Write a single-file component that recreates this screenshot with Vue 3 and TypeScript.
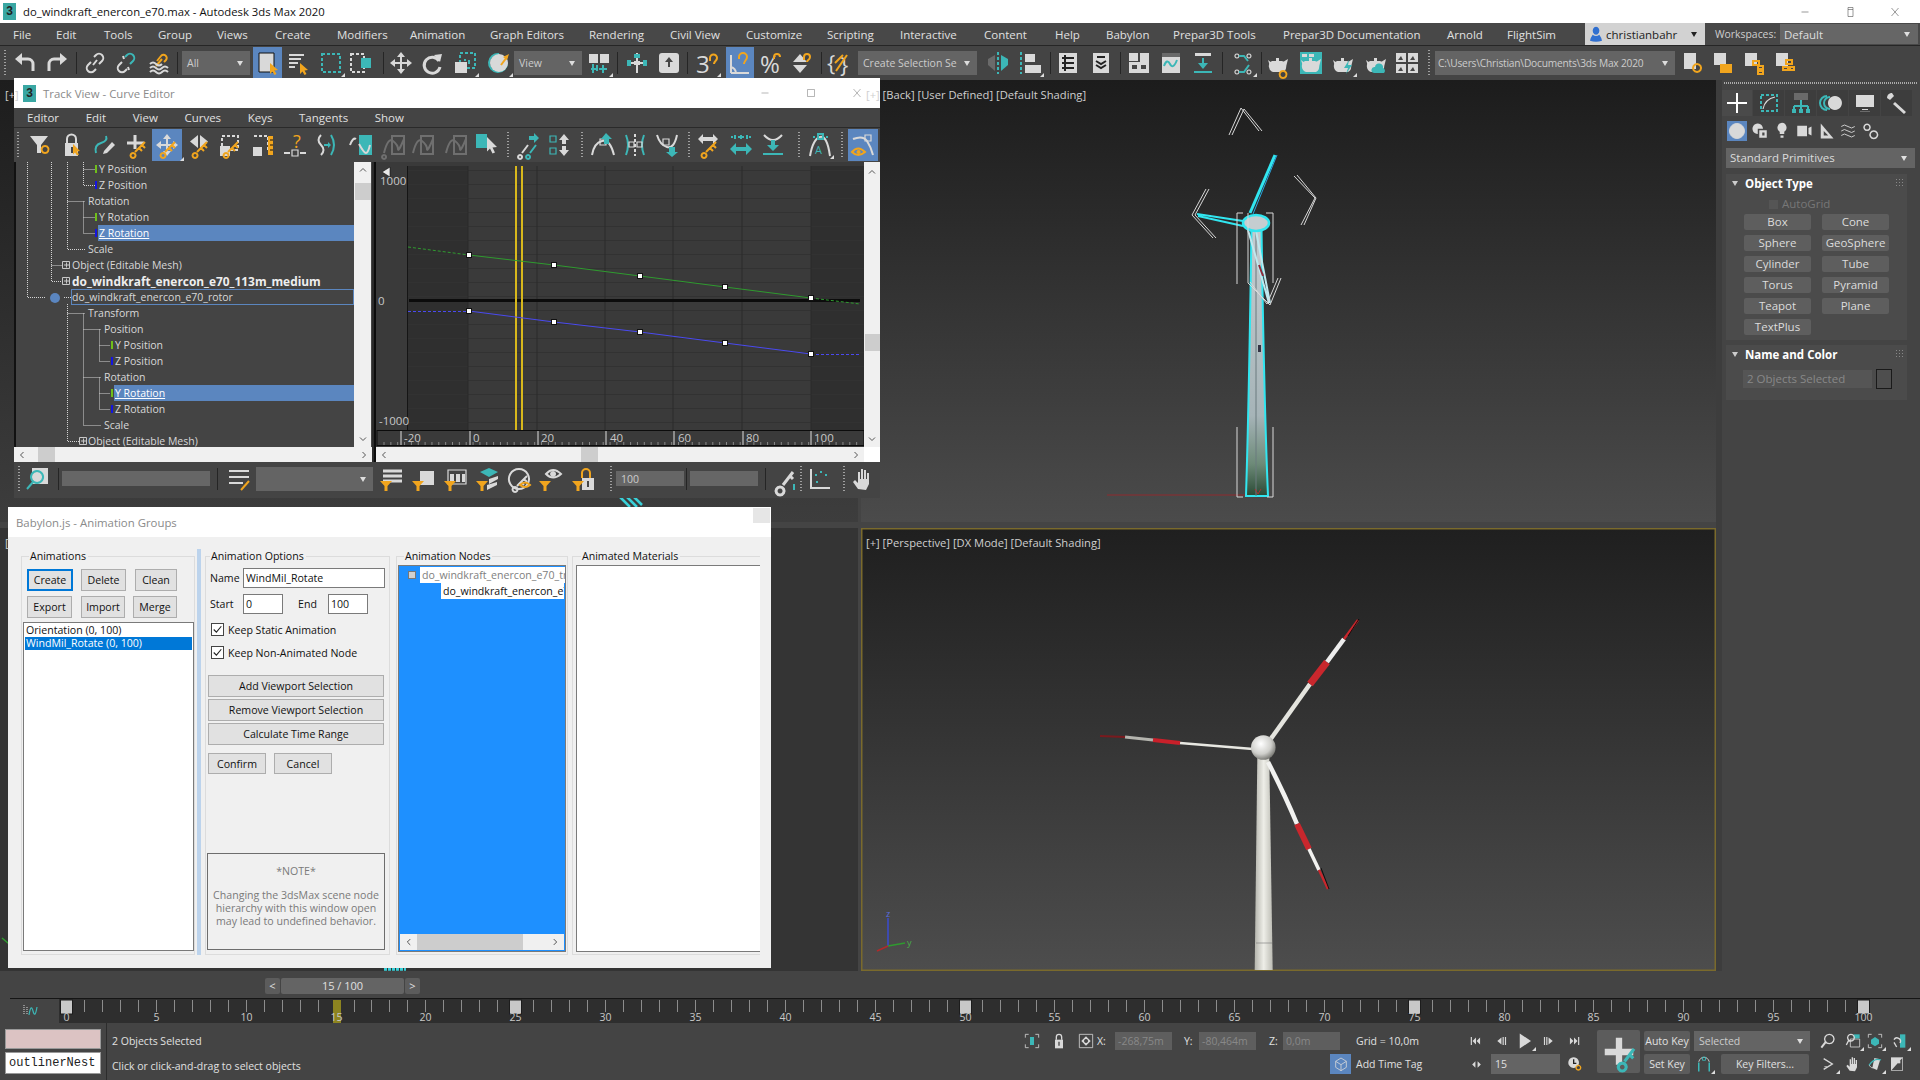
<template>
  <div class="app">
    <!-- Main window title -->
    <header class="titlebar">
      <span class="logo">3</span>
      <span class="title-text">do_windkraft_enercon_e70.max - Autodesk 3ds Max 2020</span>
      <span class="win-btns">
        <Ic n="winMin" :s="12" /><Ic n="winRestore" :s="12" /><Ic n="winClose" :s="12" />
      </span>
    </header>

    <nav class="menubar">
      <span v-for="m in mainMenu" :key="m.t" class="menu-item" :style="{ width: m.w + 'px' }">{{ m.t }}</span>
      <span class="user-box"><Ic n="person" :s="16" />christianbahr<i class="caret dark"></i></span>
      <span class="ws-label">Workspaces:</span>
      <span class="ws-drop">Default<i class="caret"></i></span>
    </nav>

    <div class="toolbar">
      <div v-for="t in mainTools" :key="t.key" class="tool" :class="t.cls" :style="{ marginLeft: t.m + 'px', width: t.w + 'px' }">
        <Ic v-if="t.icon" :n="t.icon" :s="t.s" />{{ t.label }}
      </div>
    </div>

    <div class="work">
      <div class="viewports">
        <section class="vp vp-tl">
          <span class="vp-label">[+]</span>
          <svg class="scene" viewBox="0 80 858 442">
            <path d="M620 497L630 507M627 497L637 507M634 497L642 505" stroke="#3ad0d8" stroke-width="2.5" />
          </svg>
        </section>
        <section class="vp vp-back">
          <span class="vp-label">[+] [Back] [User Defined] [Default Shading]</span>
          <svg class="scene" viewBox="861 80 855 442">
            <defs>
              <linearGradient id="towerBack" x1="0" y1="0" x2="0" y2="1">
                <stop offset="0" stop-color="#c4ccd0" />
                <stop offset="0.7" stop-color="#a6b4b8" />
                <stop offset="0.88" stop-color="#6d8a78" />
                <stop offset="1" stop-color="#2a4a35" />
              </linearGradient>
            </defs>
            <path d="M1107 495H1250" stroke="#8f2a2e" stroke-width="1" />
            <path d="M1251.5 228Q1249 400 1246 496L1268 496Q1264 400 1261.5 228Z" fill="url(#towerBack)" stroke="#31e6f0" stroke-width="2" />
            <path d="M1256 228V496" stroke="#6b7a7e" stroke-width="1" />
            <path d="M1250 213L1275 155" stroke="#31e6f0" stroke-width="3" />
            <path d="M1277 155L1253 214" stroke="#2aa6e0" stroke-width="1" />
            <path d="M1197 214L1243 221M1198 216L1243 226" stroke="#31e6f0" stroke-width="2" />
            <path d="M1248 230L1269 303M1255 226L1270 303" stroke="#bfe8ee" stroke-width="2" />
            <path d="M1259 265L1263 276" stroke="#8f2a3a" stroke-width="2" />
            <ellipse cx="1256" cy="223" rx="13" ry="8" fill="#c5cdd0" stroke="#31e6f0" stroke-width="2.5" />
            <g fill="none" stroke="#d8d8d8" stroke-width="1">
              <path d="M1229 135L1241 108L1259 131M1232 135L1244 109L1262 131" />
              <path d="M1294 176L1315 198L1301 225M1297 175L1316 198L1304 225" />
              <path d="M1209 189L1195 215L1216 238M1206 189L1192 215L1213 238" />
              <path d="M1248 283L1270 305L1281 278M1250 282L1267 304L1278 278" />
              <path d="M1237 284V213H1243M1266 213H1273V283M1248 283V213" />
              <path d="M1237 427V497H1243M1273 427V497H1267" />
            </g>
            <path d="M1258 345h3v7h-3z" fill="#334" />
            <path d="M1255 489l3 5 3-5" fill="none" stroke="#a33" stroke-width="1" />
          </svg>
        </section>
        <section class="vp vp-bl">
          <span class="vp-label">[</span>
          <svg class="scene" viewBox="0 528 858 443">
            <path d="M2 938l6 5 3-3" stroke="#2f9a2f" stroke-width="1.5" fill="none" />
            <path d="M384 968.5h22M384 970h22" stroke="#3ad0d8" stroke-width="1.5" stroke-dasharray="3 1" />
          </svg>
        </section>
        <section class="vp vp-persp">
          <span class="vp-label">[+] [Perspective] [DX Mode] [Default Shading]</span>
          <svg class="scene" viewBox="861 528 855 443">
            <defs>
              <linearGradient id="towerPersp" x1="0" y1="0" x2="1" y2="0">
                <stop offset="0" stop-color="#b4b4ac" />
                <stop offset="0.5" stop-color="#eeeee8" />
                <stop offset="1" stop-color="#bcbcb4" />
              </linearGradient>
              <radialGradient id="hubGrad" cx="0.4" cy="0.35" r="0.7">
                <stop offset="0" stop-color="#ffffff" />
                <stop offset="0.6" stop-color="#cfcfcb" />
                <stop offset="1" stop-color="#6d6d68" />
              </radialGradient>
            </defs>
            <path d="M1257.3 758L1269.3 758L1272.7 970L1254.7 970Z" fill="url(#towerPersp)" />
            <path d="M1256 943H1272" stroke="#777" stroke-width="0.6" />
            <!-- blade up-right -->
            <path d="M1270 740L1310 684" stroke="#e4e4de" stroke-width="4.5" />
            <path d="M1310 684L1327 662" stroke="#c9272d" stroke-width="7" />
            <path d="M1327 662L1344 639" stroke="#ededed" stroke-width="4.5" />
            <path d="M1344 639L1358 620" stroke="#c9272d" stroke-width="2.5" />
            <path d="M1348 636L1359 619" stroke="#000" stroke-width="0.8" />
            <!-- blade left -->
            <path d="M1253 749L1180 743" stroke="#e8e8e2" stroke-width="2.5" />
            <path d="M1180 743L1153 740" stroke="#c8202a" stroke-width="4" />
            <path d="M1153 740L1125 737" stroke="#b4b4ae" stroke-width="3" />
            <path d="M1125 737L1100 736" stroke="#7a1a1e" stroke-width="2" />
            <!-- blade down-right -->
            <path d="M1268 762Q1285 795 1297 824" stroke="#f2f2f0" stroke-width="4.5" fill="none" />
            <path d="M1297 824L1309 849" stroke="#c9272d" stroke-width="6" />
            <path d="M1309 849L1319 870" stroke="#f2f2f0" stroke-width="3.5" />
            <path d="M1319 870L1328 889" stroke="#c9272d" stroke-width="2.5" />
            <path d="M1321 868L1329 889" stroke="#000" stroke-width="0.8" />
            <circle cx="1263.3" cy="747.5" r="12.3" fill="url(#hubGrad)" />
            <!-- axis tripod -->
            <path d="M888 946V918" stroke="#3a4bd0" stroke-width="1.5" />
            <path d="M888 946L905 943" stroke="#2f9a2f" stroke-width="1.5" />
            <path d="M888 946L877 951" stroke="#b02a2a" stroke-width="1.5" />
            <text x="886" y="917" class="axis" fill="#5a6ee0">z</text>
            <text x="907" y="946" class="axis" fill="#49b049">y</text>
          </svg>
        </section>
      </div>

      <!-- Command panel -->
      <aside class="cmd">
        <div class="cmd-dots"></div>
        <div class="cmd-tabs">
          <span v-for="(c, i) in cmdTabs" :key="c" class="cmd-tab" :class="{ on: i === 0 }"><Ic :n="c" :s="24" /></span>
        </div>
        <div class="cmd-sub">
          <span v-for="(c, i) in cmdSub" :key="c" class="cmd-sub-item" :class="{ on: i === 0 }"><Ic :n="c" :s="18" /></span>
        </div>
        <div class="cmd-drop">Standard Primitives<i class="caret"></i></div>
        <div class="rollout r-type">
          <div class="r-head"><i class="caret small"></i><b>Object Type</b><em class="r-grip"></em></div>
          <div class="autogrid"><i></i>AutoGrid</div>
          <div class="prim-grid">
            <button v-for="p in primitives" :key="p">{{ p }}</button>
          </div>
        </div>
        <div class="rollout r-name">
          <div class="r-head"><i class="caret small"></i><b>Name and Color</b><em class="r-grip"></em></div>
          <div class="name-row"><span class="name-field">2 Objects Selected</span><span class="swatch"></span></div>
        </div>
      </aside>
    </div>

    <!-- Time slider -->
    <div class="sliderbar">
      <span class="sl-btn">&lt;</span><span class="sl-track">15 / 100</span><span class="sl-btn">&gt;</span>
    </div>

    <svg class="timeline" viewBox="0 998 1920 25">
      <rect x="59" y="999" width="1811" height="24" fill="#2e2e2e" />
      <path d="M10 998.5H1920" stroke="#151515" />
      <path d="M24 1005v10M27 1007v8" stroke="#d8d8d8" stroke-width="1" stroke-dasharray="1 1" />
      <path d="M29 1015q2-12 4-4t4-4" stroke="#3cb7b7" fill="none" stroke-width="1.2" />
      <path v-for="f in frames" :key="f" :d="`M${frameX(f)} 1000V1012`" stroke="#8c8c8c" stroke-width="1" />
      <rect x="333" y="1000" width="8" height="23" fill="#8d8420" />
      <rect v-for="k in [0, 25, 50, 75, 100]" :key="k" :x="frameX(k) - 6" y="1000" width="12" height="14" fill="#c8c8c8" stroke="#1c1c1c" />
      <text v-for="l in frameLabels" :key="l" :x="frameX(l)" y="1021" class="tl-text" text-anchor="middle">{{ l }}</text>
    </svg>

    <!-- Status area -->
    <footer class="status">
      <div class="script-boxes">
        <div class="pink-box"></div>
        <div class="script-box">outlinerNest</div>
      </div>
      <div class="prompts">
        <span>2 Objects Selected</span>
        <span>Click or click-and-drag to select objects</span>
      </div>
      <div class="st-block coords">
        <div class="st-row">
          <div v-for="t in statusTop" :key="t.key" class="tool st" :class="t.cls" :style="{ marginLeft: t.m + 'px', width: t.w + 'px' }">
            <Ic v-if="t.icon" :n="t.icon" :s="t.s" />{{ t.label }}
          </div>
        </div>
        <div class="st-row">
          <div v-for="t in statusBottom" :key="t.key" class="tool st" :class="t.cls" :style="{ marginLeft: t.m + 'px', width: t.w + 'px' }">
            <Ic v-if="t.icon" :n="t.icon" :s="t.s" />{{ t.label }}
          </div>
        </div>
      </div>
      <div class="bigkey"><Ic n="bigKey" :s="38" /></div>
      <div class="st-block keys">
        <div class="st-row">
          <div v-for="t in keysTop" :key="t.key" class="tool st" :class="t.cls" :style="{ marginLeft: t.m + 'px', width: t.w + 'px' }">
            <Ic v-if="t.icon" :n="t.icon" :s="t.s" />{{ t.label }}
          </div>
        </div>
        <div class="st-row">
          <div v-for="t in keysBottom" :key="t.key" class="tool st" :class="t.cls" :style="{ marginLeft: t.m + 'px', width: t.w + 'px' }">
            <Ic v-if="t.icon" :n="t.icon" :s="t.s" />{{ t.label }}
          </div>
        </div>
      </div>
    </footer>

    <!-- Track View floating window -->
    <section class="win track">
      <header class="win-title">
        <span class="logo small">3</span>
        <span>Track View - Curve Editor</span>
        <span class="win-btns dim"><Ic n="winMin" :s="12" /><Ic n="winMax" :s="12" /><Ic n="winClose" :s="12" /></span>
      </header>
      <nav class="track-menu">
        <span v-for="m in trackMenu" :key="m">{{ m }}</span>
      </nav>
      <div class="toolbar track-tools">
        <div v-for="t in trackTools" :key="t.key" class="tool" :class="t.cls" :style="{ marginLeft: t.m + 'px', width: t.w + 'px' }">
          <Ic v-if="t.icon" :n="t.icon" :s="t.s" />{{ t.label }}
        </div>
      </div>
      <div class="track-body">
        <div class="tree">
          <div class="tree-rows">
            <div
              v-for="r in treeRows"
              :key="r.key"
              class="tree-row"
              :class="{ bold: r.bold, sel: r.sel, current: r.current }"
              :style="{ paddingLeft: r.x - 15 + 'px' }"
            >
              <span class="tree-label"><span>{{ r.t }}</span></span>
            </div>
          </div>
          <svg class="tree-lines" viewBox="14 162 340 285">
            <path d="M27.5 162V297.5H45M51.5 162V281.5H62M51.5 265.5H62M67.5 162V249.5H85M67.5 201.5H85M83.5 162V185.5H95M83.5 169.5H95M83.5 201.5V233.5H95M83.5 217.5H95M64 297.5H71M67.5 304V441.5H79M67.5 313.5H85M83.5 313.5V425.5H101M83.5 329.5H101M83.5 377.5H101M99.5 329.5V361.5H110M99.5 345.5H110M99.5 377.5V409.5H110M99.5 393.5H110" fill="none" stroke="#d4d4d4" stroke-dasharray="1 1" />
            <circle cx="55" cy="298" r="5" fill="#5b86c0" />
            <g fill="#464646" stroke="#c8c8c8">
              <path d="M62.5 261.5h7v7h-7zM62.5 277.5h7v7h-7zM79.5 437.5h7v7h-7z" />
            </g>
            <path d="M64 265h5M66.5 262.5v5M64 281h5M66.5 278.5v5M81 441h5M83.5 438.5v5" stroke="#c8c8c8" fill="none" />
            <path d="M96 165v8M96 213v8M112 341v8M112 389v8" stroke="#6fbf1a" stroke-width="2" fill="none" />
            <path d="M96 181v8M96 229v8M112 357v8M112 405v8" stroke="#1414e0" stroke-width="2" fill="none" />
          </svg>
        </div>
        <div class="vscroll">
          <Ic n="chevU" :s="12" /><span class="v-thumb t1"></span><Ic n="chevD" :s="12" />
        </div>
        <div class="gap"></div>
        <svg class="graph" viewBox="376 162 488 285">
          <rect x="376" y="162" width="488" height="285" fill="#3a3a3a" />
          <rect x="408" y="166" width="60" height="264" fill="#2f2f2f" />
          <rect x="811" y="166" width="53" height="264" fill="#2f2f2f" />
          <path v-for="y in gridY" :key="y" :d="`M408 ${y}H864`" stroke="#323232" stroke-width="1" />
          <path v-for="x in [468, 537, 605, 673, 742, 811]" :key="x" :d="`M${x} 166V430`" stroke="#2a2a2a" stroke-width="1" />
          <path d="M407.5 166V430" stroke="#151515" />
          <path d="M409 300.5H860" stroke="#0c0c0c" stroke-width="3" />
          <path d="M516 166V444M522 166V444" stroke="#d8b81c" stroke-width="2" />
          <path d="M408 247L469 255" stroke="#2f9a2f" stroke-dasharray="3 2" />
          <path d="M469 255L554 265L640 276L725 287L811 298" stroke="#2f9a2f" fill="none" />
          <path d="M811 298L860 304" stroke="#2f9a2f" stroke-dasharray="3 2" />
          <path d="M408 311.5H469" stroke="#4a4af0" stroke-dasharray="3 2" />
          <path d="M469 311L554 322L640 332L725 343L811 354" stroke="#4a4af0" fill="none" />
          <path d="M811 354.5H860" stroke="#4a4af0" stroke-dasharray="3 2" />
          <g fill="#fff" stroke="#111">
            <rect v-for="k in graphKeys" :key="k[0] + '-' + k[1]" :x="k[0] - 2.5" :y="k[1] - 2.5" width="5" height="5" />
          </g>
          <path d="M382 172l8-5v10z" fill="#e8e8e8" stroke="#111" stroke-width="0.6" />
          <text x="380" y="185" class="g-text">1000</text>
          <text x="378" y="305" class="g-text">0</text>
          <text x="379" y="425" class="g-text">-1000</text>
          <rect x="377" y="430.5" width="487" height="15" fill="#3a3a3a" stroke="#0c0c0c" />
          <path v-for="x in rulerTicks" :key="x" :d="`M${x} 442V445`" stroke="#aaa" stroke-width="0.7" />
          <path v-for="x in [401, 470, 538, 606, 674, 743, 811]" :key="x" :d="`M${x} 431V445`" stroke="#ddd" />
          <text v-for="l in rulerLabels" :key="l[0]" :x="l[1]" y="442" class="g-text">{{ l[0] }}</text>
        </svg>
        <div class="vscroll narrow">
          <Ic n="chevU" :s="12" /><span class="v-thumb t2"></span><Ic n="chevD" :s="12" />
        </div>
        <div class="hscroll s1"><Ic n="chevL" :s="12" /><span class="h-thumb"></span><Ic n="chevR" :s="12" /></div>
        <div class="gap dark"></div>
        <div class="hscroll s2"><Ic n="chevL" :s="12" /><span class="h-thumb"></span><Ic n="chevR" :s="12" /></div>
        <div class="hcorner"></div>
      </div>
      <div class="toolbar track-bottom">
        <div v-for="t in trackBottom" :key="t.key" class="tool" :class="t.cls" :style="{ marginLeft: t.m + 'px', width: t.w + 'px' }">
          <Ic v-if="t.icon" :n="t.icon" :s="t.s" />{{ t.label }}
        </div>
      </div>
    </section>

    <!-- Babylon exporter dialog -->
    <section class="win babylon">
      <header class="win-title plain">
        <span>Babylon.js - Animation Groups</span>
        <span class="close-stub"></span>
      </header>
      <div class="dlg-body">
        <fieldset class="group g-anim">
          <legend>Animations</legend>
          <div class="btn-row first">
            <button class="focus w46">Create</button><button class="w45 m8">Delete</button><button class="w42 m9">Clean</button>
          </div>
          <div class="btn-row">
            <button class="w45">Export</button><button class="w44 m9">Import</button><button class="w44 m8">Merge</button>
          </div>
          <div class="anim-list">
            <div>Orientation (0, 100)</div>
            <div class="picked">WindMil_Rotate (0, 100)</div>
          </div>
        </fieldset>
        <div class="splitter"></div>
        <fieldset class="group g-opts">
          <legend>Animation Options</legend>
          <div class="field-row name"><label>Name</label><span class="input wide">WindMil_Rotate</span></div>
          <div class="field-row range">
            <label>Start</label><span class="input short">0</span>
            <label class="end">End</label><span class="input short">100</span>
          </div>
          <div class="check"><Ic n="check" :s="13" />Keep Static Animation</div>
          <div class="check second"><Ic n="check" :s="13" />Keep Non-Animated Node</div>
          <button class="long first">Add Viewport Selection</button>
          <button class="long">Remove Viewport Selection</button>
          <button class="long">Calculate Time Range</button>
          <div class="confirm-row"><button>Confirm</button><button>Cancel</button></div>
          <div class="note">
            <p class="note-h">*NOTE*</p>
            <p>Changing the 3dsMax scene node hierarchy with this window open may lead to undefined behavior.</p>
          </div>
        </fieldset>
        <fieldset class="group g-nodes">
          <legend>Animation Nodes</legend>
          <div class="node-tree">
            <div class="node-row one"><i class="minus"></i><span>do_windkraft_enercon_e70_tr</span></div>
            <div class="node-row two"><span>do_windkraft_enercon_e70</span></div>
            <div class="node-scroll"><Ic n="chevLd" :s="10" /><span class="nthumb"></span><Ic n="chevRd" :s="10" /></div>
          </div>
        </fieldset>
        <fieldset class="group g-mats">
          <legend>Animated Materials</legend>
          <div class="mat-box"></div>
        </fieldset>
      </div>
    </section>
  </div>
</template>

<script setup lang="ts">
import { h } from "vue";

type Shape = { d?: string; t?: string; x?: number; y?: number; fs?: number; p: string };

const G = "#d9d9d9";
const T = "#3cb7b7";
const O = "#f1a51e";

const paints: Record<string, Record<string, string | number>> = {
  g: { fill: G },
  t: { fill: T },
  o: { fill: O },
  w: { fill: "#fff" },
  dk: { fill: "#464646" },
  dim: { fill: "#6a6a6a" },
  blue: { fill: "#5b86c0" },
  gs: { fill: "none", stroke: G, "stroke-width": 2 },
  gs3: { fill: "none", stroke: G, "stroke-width": 3 },
  gt: { fill: "none", stroke: G, "stroke-width": 1.2 },
  ts: { fill: "none", stroke: T, "stroke-width": 2 },
  tt: { fill: "none", stroke: T, "stroke-width": 1.2 },
  os: { fill: "none", stroke: O, "stroke-width": 2 },
  gd: { fill: "none", stroke: G, "stroke-width": 2, "stroke-dasharray": "3 2" },
  td: { fill: "none", stroke: T, "stroke-width": 2, "stroke-dasharray": "3 2" },
  dims: { fill: "none", stroke: "#6f6f6f", "stroke-width": 2 },
  bk: { fill: "none", stroke: "#111", "stroke-width": 1 },
  bk2: { fill: "none", stroke: "#222", "stroke-width": 2 },
  chev: { fill: "none", stroke: "#555", "stroke-width": 2 },
  chevd: { fill: "none", stroke: "#333", "stroke-width": 2 },
  win: { fill: "none", stroke: "#333", "stroke-width": 1 },
  person: { fill: "#2f6fd0" },
};

const P = (d: string, p: string): Shape => ({ d, p });
const X = (t: string, x: number, y: number, fs: number, p: string): Shape => ({ t, x, y, fs, p });

const key = (p = "os"): Shape[] => [P("M8 20a2.5 2.5 0 1 0 .1 0zM10 19L20 9M17 12l3 3M14 15l3 3", p)];
const cursor = P("M14 12l8 7-3.5.5 2 3.5-2 1-2-3.5-2.5 2.5z", "o");
const cursorG = P("M12 4l10 10-4.5.5 2.5 5-2.5 1-2.5-5-3 3z", "g");
const funnel = P("M1 14h12l-4.5 5v5h-3v-5z", "o");
const chain = (p: string): Shape => P("M10 14l4-5M11 6l2-2a4 4 0 0 1 6 6l-3 3M13 18l-2 2a4 4 0 0 1-6-6l3-3", p);
const teapot = [P("M6 10h10a6 6 0 0 1 1 11H7a6 6 0 0 1-1-11z", "g"), P("M17 11l5-3-2 8z", "g"), P("M6 12L2 9l3 9z", "g"), P("M10 7h3v3h-3z", "g")];
const arrows = P("M12 1l4 5h-3v5h5V8l5 4-5 4v-3h-5v5h3l-4 5-4-5h3v-5H6v3l-5-4 5-4v3h5V6H8z", "g");
const dimCurve = [P("M10 3h12v18H10z", "dims"), P("M2 20Q6 4 11 8t5 8 6-10", "dims")];

const icons: Record<string, Shape[]> = {
  undo: [P("M7 8h8a5 5 0 0 1 5 5v7", "gs3"), P("M9 2v12L2 8z", "g")],
  redo: [P("M17 8H9a5 5 0 0 0-5 5v7", "gs3"), P("M15 2v12l7-6z", "g")],
  link: [chain("gs")],
  unlink: [P("M11 6l2-2a4 4 0 0 1 6 6l-3 3", "ts"), P("M13 18l-2 2a4 4 0 0 1-6-6l3-3", "gs"), P("M9 5l1 3M15 19l-1-3", "gs")],
  bind: [P("M9 15l6-7M10 10l4-5a3 3 0 0 1 5 4l-2 2", "os"), P("M3 13q3-3 6 0t6 0M3 17q3-3 6 0t6 0 6 0M3 21q3-3 6 0t6 0 6 0", "gs")],
  select: [P("M3 2h15v19H3z", "g"), P("M3 2h15v19H3z", "bk"), cursor],
  selName: [P("M3 4h15M3 8h12M3 12h9M3 16h6", "gs"), cursor],
  region: [P("M3 3h18v18H3z", "td")],
  windowCross: [P("M2 3h13v18H2z", "gd"), P("M12 7h10v10H12z", "t")],
  move: [arrows],
  rotate: [P("M18 10a8 8 0 1 0 1 6", "gs3"), P("M13 4l8-1-2 8z", "g")],
  scale: [P("M7 2h15v15H7z", "td"), P("M13 9h-2M16 9v4", "ts"), P("M2 11h12v11H2z", "g")],
  place: [P("M20 12a9 9 0 1 1-8-9", "ts"), P("M3 12a9 9 0 1 1 9 9 9 9 0 0 1-9-9z", "g"), P("M14 14l6-8", "os"), P("M22 3l-2 6-4-3z", "o")],
  pivot: [P("M2 3h9v9H2zM13 3h9v9h-9z", "g"), P("M6 13v9M10 14v6M4 18h7M16 14v8M12 18h8", "ts")],
  manip: [P("M12 2v20M2 12h20", "gs"), P("M9 3h6v4H9zM2 9h4v6H2zM18 9h4v6h-4z", "t"), P("M9 10h6v4H9z", "g")],
  keyb: [P("M5 2h14a3 3 0 0 1 3 3v14a3 3 0 0 1-3 3H5a3 3 0 0 1-3-3V5a3 3 0 0 1 3-3z", "g"), P("M12 6l4 5h-3v5h-2v-5H8z", "dk")],
  snap3: [X("3", 1, 22, 24, "g"), P("M15 10V7a3.5 3.5 0 0 1 7 0c0 3-3 3-3 6", "os")],
  snapA: [P("M3 22V4M3 22h18M8 22a7 7 0 0 0-5-6", "gs"), P("M11 8V6a4 4 0 0 1 8 0c0 3-3 4-3 7", "os")],
  percent: [X("%", 0, 22, 24, "g"), P("M14 8V6a3 3 0 0 1 6 0", "os")],
  spin: [P("M3 14h14l-7 8z", "g"), P("M3 11h14l-7-8z", "g"), P("M14 9V6a3 3 0 0 1 6 0c0 3-3 3-3 5", "os")],
  named: [X("{", 0, 20, 22, "g"), X("}", 13, 22, 22, "g"), P("M9 20L20 4", "os"), P("M8 12l8-8", "os")],
  mirror: [P("M12 1v22", "td"), P("M9 4v16L2 14V8z", "dim"), P("M15 4v16l7-6V8z", "t")],
  align: [P("M3 1v22", "td"), P("M7 3h10v8H7z", "g"), P("M7 14h16v8H7z", "g")],
  layer: [P("M3 2h18v20H3z", "g"), P("M6 7h12M6 12h12M6 17h12M9 4v16", "bk2")],
  ribbon: [P("M4 2h16v20H4z", "g"), P("M8 6h8M7 10l5 3 5-3M7 14l5 3 5-3", "bk2")],
  editGrid: [P("M2 2h20v20H2z", "g"), P("M11 2h2v9H2v-1h9zM5 14h5v4H5zM14 14h5v4h-5z", "dk")],
  curveEd: [P("M3 2h18v20H3z", "g"), P("M3 2h18v4H3z", "dim"), P("M5 15q3-8 6-2t7-4", "ts")],
  dope: [P("M4 2h16v3H4z", "g"), P("M12 7v10", "ts"), P("M7 12l5 6 5-6z", "t"), P("M3 20h18v2H3z", "t")],
  schem: [P("M6 3a2 2 0 1 1-.1 0zM6 19a2 2 0 1 1-.1 0zM18 3a2 2 0 1 1-.1 0zM18 19a2 2 0 1 1-.1 0z", "gt"), P("M8 5h5l4 5M8 21h5l5-7", "ts")],
  tpGear: [...teapot, P("M17 20a3.5 3.5 0 1 0 .1 0z", "os")],
  tpFrame: [P("M1 1h22v22H1z", "t"), P("M3 3h5v3H3zM10 3h5v3h-5z", "g"), ...teapot],
  tpBolt: [...teapot, P("M18 9l-5 8h4l-2 6 6-9h-4z", "t")],
  tpCloud: [...teapot, P("M10 22a3 3 0 0 1 1-6 4 4 0 0 1 8 1 3 3 0 0 1 1 5z", "t")],
  grid4: [P("M1 2h10v9H1zM13 2h10v9H13zM1 13h10v9H1zM13 13h10v9H13z", "g"), P("M3 9l3-4 2 4zM15 9l3-4 2 4zM3 20l3-4 2 4zM15 20l3-4 2 4z", "dk")],
  folderGear: [P("M4 2h12v16H4z", "g"), P("M17 13a4 4 0 1 0 .1 0z", "os")],
  folderOpen: [P("M4 2h12v12H4z", "g"), P("M10 13h12v9H10z", "o")],
  folderList: [P("M4 2h12v13H4z", "g"), P("M12 10h6v4h-6zM17 15h5v3h-5zM17 20h5v3h-5z", "os")],
  folderTree: [P("M4 2h12v13H4z", "g"), P("M14 9h6v4h-6zM11 16h5v3h-5zM18 16h4v3h-4z", "os")],
  filterGear: [P("M2 3h18l-7 9v8h-4v-8z", "g"), P("M17 13a3.5 3.5 0 1 0 .1 0z", "os")],
  lockCur: [P("M7 11V6a4.5 4.5 0 0 1 9 0v5", "gs"), P("M5 10h13v13H5z", "g"), P("M11 14h2v6h-2z", "dk"), P("M13 11l7 7-3 .5 2 3-2 1-2-3-2 2z", "o")],
  drawCurve: [P("M4 20Q2 12 9 10t5-7", "ts"), P("M12 18L20 9l3 3-8 8-4 1z", "g")],
  addKey: [P("M10 2v14M2 10h17", "gs3"), ...key()],
  moveKey: [arrows, ...key()],
  slideKey: [P("M11 2v13l-8-6.5zM13 2v13l8-6.5z", "g"), ...key()],
  scaleKey: [P("M4 3h16v14H4z", "gd"), P("M2 13h10v10H2z", "g"), ...key()],
  scaleVal: [P("M3 3h14v14", "gd"), P("M2 14h9v9H2z", "g"), P("M17 3h5v19h-5z", "o"), P("M19 7h3M19 12h3M19 17h3", "bk")],
  insertKey: [X("?", 10, 15, 18, "o"), P("M1 20h6M17 20h6", "gs"), P("M9 17h6v6H9z", "gt")],
  retime: [P("M7 2Q2 7 7 12T7 22", "gs"), P("M17 2q6 10 0 20", "ts"), P("M10 12h5", "ts"), P("M14 9l3 3-3 3z", "t")],
  freehand: [P("M10 2h13v20H10z", "t"), P("M10 11q5 9 7 9t4-8", "gs"), P("M1 12q3-8 6-6", "gs")],
  dim1: [...dimCurve, P("M2 22a2 2 0 1 0 .1 0", "dims")],
  dim2: [...dimCurve],
  dim3: [...dimCurve],
  cursorT: [P("M1 1h11v14H1z", "t"), cursorG],
  keyArrow: [P("M4 22a2 2 0 1 0 .1 0zM6 20l6-8", "gs"), P("M12 22a2 2 0 1 0 .1 0zM14 20l6-8", "ts"), P("M13 3h5V0l5 5-5 5V7h-5z", "t")],
  snapKeys: [P("M2 3h6v6H2zM2 15h6v6H2z", "tt"), P("M16 1l5 6h-3v4h-4V7h-3z", "g"), P("M16 23l5-6h-3v-4h-4v4h-3z", "g")],
  tanOut: [P("M1 22Q3 10 11 8t12 14", "gs"), P("M9 6h6v6H9z", "gt"), P("M15 0l6 6h-3v5h-5V6h-3z", "t")],
  tanMirror: [P("M3 2q4 10 0 20M21 2q-4 10 0 20", "ts"), P("M12 1v22", "gd"), P("M6 9h5v5H6zM14 9h5v5h-5z", "gt")],
  tanIn: [P("M2 2q3 10 10 12t10-12", "gs"), P("M8 6h6v6H8z", "gt"), P("M14 14h6v5h3l-6 5-6-5h3z", "t")],
  hKey: [P("M2 6l5-5v3h10V1l5 5-5 5V8H7v3z", "g"), ...key()],
  hEven: [P("M2 4h2M6 2v4M9 4h6M18 2v4M20 4h2M12 2v4", "ts"), P("M1 16l6-6v4h10v-4l6 6-6 6v-4H7v4z", "t")],
  vDown: [P("M3 2q9 10 18 0", "gs"), P("M10 7h4v5h4l-6 6-6-6h4z", "t"), P("M2 21h20", "ts")],
  aTan: [P("M2 23Q5 6 12 4t10 19", "gs"), P("M5 4h2M10 1h5v5h-5zM18 4h2", "ts"), X("A", 7, 21, 11, "t")],
  eyeCurve: [P("M2 6q10-4 14 2t6 14", "gs"), P("M14 2h6v6h-6z", "gt"), P("M1 19q6-7 13 0-7 6-13 0z", "os"), P("M7.5 17a2 2 0 1 0 .1 0z", "o")],
  lens: [P("M7 1h16v16H7z", "g"), P("M12 4a6 6 0 1 0 .1 0z", "ts"), P("M8 15l-6 7", "ts")],
  editLines: [P("M2 4h20M2 10h20M2 16h14", "gs"), P("M14 23l8-9", "os")],
  fLines: [P("M4 4h19M4 9h19M4 14h19", "gs3"), funnel],
  fRect: [P("M9 4h14v14H9z", "g"), funnel],
  fFilm: [P("M5 3h18v14H5z", "gt"), P("M7 7h4v8H7zM13 7h4v8h-4zM19 7h3v8h-3z", "g"), funnel],
  fLayers: [P("M14 1l9 4-9 5-9-5z", "t"), P("M14 12l9-3v3l-9 5z", "g"), P("M12 18l10-3v3l-10 5z", "g"), funnel],
  keyCircle: [P("M12 2a10 10 0 1 1-.1 0z", "gs"), ...key("gs"), P("M13 18q5-5 10 0-5 4-10 0z", "os")],
  fEye: [P("M8 7q7-8 15 0-8 7-15 0z", "gs"), P("M15 4a3 3 0 1 0 .1 0z", "g"), funnel],
  fLock: [P("M11 11V6a4 4 0 0 1 8 0v5", "os"), P("M11 11h12v12H11z", "g"), P("M16 14h2v6h-2z", "dk"), funnel],
  keySmall: [P("M7 20a4 4 0 1 0 .1 0zM10 18L20 5M17 9l3 3", "gs3"), P("M20 17h2v6h-2z", "t")],
  axes: [P("M3 2v19h19", "gs"), P("M7 8h2M12 5h2M17 8h2M8 15h2", "ts")],
  hand: [P("M7 22l-5-7 2-2 3 3V5h2v7h1V2h2v10h1V3h2v9h1V6h2v11l-3 6z", "g")],
  winMin: [P("M5 12h14", "win")],
  winMax: [P("M5 5h14v14H5z", "win")],
  winRestore: [P("M8 7h10v14H8zM8 7V3h10v4", "win")],
  winClose: [P("M5 4l14 16M19 4L5 20", "win")],
  person: [P("M12 1a5 6 0 1 0 .1 0zM7 13q-3 4-4 9 9 3 18 0-1-5-4-9-5 4-10 0z", "person")],
  plus: [P("M11 2h2v20h-2zM2 11h20v2H2z", "w")],
  modify: [P("M4 4h16v16H4z", "td"), P("M6 18q2-10 12-12", "gt")],
  hierarchy: [P("M5 2h14v7H5z", "dim"), P("M12 9v6M5 15h14M5 15v3M12 15v3M19 15v3", "ts"), P("M3 18h4v4H3zM10 18h4v4h-4zM17 18h4v4h-4z", "t")],
  motion: [P("M9 6a6 6 0 1 0 0 12M6 5a7 7 0 1 0 0 14", "ts"), P("M14 5a7 7 0 1 1-.1 0z", "g")],
  display: [P("M3 4h18v12H3z", "g"), P("M9 18h6v1H9z", "g"), P("M7 20h10v1H7z", "dim")],
  wrench: [P("M3 3l8 8M6 2Q2 3 2 7l3 2 4-4-2-3zM10 11l11 10-2 2L8 13z", "g")],
  sphere: [P("M12 2a10 10 0 1 1-.1 0z", "g"), P("M12 2a10 10 0 1 1-.1 0z", "gt")],
  shapes: [P("M9 2a7 7 0 1 1-.1 0z", "g"), P("M9 9h11v11H9z", "dk"), P("M11 11h10v10H11z", "g"), P("M15 14h3v4h-3z", "dk")],
  bulb: [P("M12 1a6.5 6.5 0 0 1 3 12v3H9v-3A6.5 6.5 0 0 1 12 1z", "g"), P("M10 18h4v3h-4z", "g")],
  camera: [P("M3 5h13v14H3z", "g"), P("M18 8l4-2v12l-4-2z", "g")],
  helper: [P("M5 2v20h17z", "g"), P("M9 12v6h6z", "dk")],
  waves: [P("M3 6q4-4 9 0t9 0M3 12q4-4 9 0t9 0M3 18q4-4 9 0t9 0", "gt")],
  gears: [P("M8 3a4 4 0 1 0 .1 0zM17 12a5 5 0 1 0 .1 0z", "gs")],
  chevU: [P("M6 15l6-6 6 6", "chev")],
  chevD: [P("M6 9l6 6 6-6", "chev")],
  chevL: [P("M15 6l-6 6 6 6", "chev")],
  chevR: [P("M9 6l6 6-6 6", "chev")],
  chevLd: [P("M15 5l-7 7 7 7", "chevd")],
  chevRd: [P("M9 5l7 7-7 7", "chevd")],
  check: [P("M5 12l5 5 9-11", "bk2")],
  selCenter: [P("M2 7V2h5M17 2h5v5M2 17v5h5M22 17v5h-5", "gt"), P("M9 6h6v12H9z", "t")],
  lockO: [P("M8 10V6a4 4 0 0 1 8 0v4", "gs"), P("M6 10h12v13H6z", "g"), P("M11 13h2v6h-2z", "dk")],
  absRel: [P("M2 2h20v20H2z", "gt"), P("M12 5l7 7-7 7-7-7z", "g"), P("M12 9a3 3 0 1 0 .1 0z", "dk")],
  first: [P("M4 5v14", "gs"), P("M12 6v12l-6-6zM19 6v12l-6-6z", "g")],
  prev: [P("M11 6v12l-7-6z", "g"), P("M14 5v14M18 5v14", "gs")],
  play: [P("M5 2l15 10-15 10z", "g")],
  next: [P("M13 6v12l7-6z", "g"), P("M6 5v14M10 5v14", "gs")],
  last: [P("M20 5v14", "gs"), P("M5 6v12l6-6zM12 6v12l6-6z", "g")],
  keyMode: [P("M10 6v12l-6-6zM14 6v12l6-6z", "g")],
  timeCfg: [P("M10 2a8 8 0 1 1-.1 0z", "g"), P("M10 5v6h4", "bk2"), P("M17 14a3.5 3.5 0 1 0 .1 0z", "os")],
  bigKey: [P("M10 3h4v17h-4zM3 10h18v4H3z", "g"), P("M14 19a2.5 2.5 0 1 0 .1 0zM15.5 18l6-8M19 14l2 2", "ts")],
  timeTag: [P("M12 3l8 5v9l-8 5-8-5V8z", "gt"), P("M4 8l8 5 8-5M12 13v9", "gt")],
  keyTan: [P("M5 22V10M19 22V10", "ts"), P("M5 9Q7 3 12 3t7 6", "gt"), P("M10 3h4v4h-4z", "tt")],
  zoom: [P("M14 2a7 7 0 1 1-.1 0z", "gs"), P("M9 13l-7 9", "gs3")],
  zoomAll: [P("M8 9h14v12H8z", "gt"), P("M13 2h9v6h-9z", "t"), P("M9 2a5 5 0 1 1-.1 0zM6 10l-4 8", "gs")],
  zoomExt: [P("M2 7V2h5M17 2h5v5M2 17v5h5M22 17v5h-5", "gt"), P("M12 6l6 4v6l-6 4-6-4v-6z", "t")],
  zoomExtAll: [P("M12 2h8v20h-8z", "t"), P("M3 10a5 5 0 1 1 9 5", "gs"), P("M3 14l4 7", "gs")],
  fovFly: [P("M4 4l13 8-13 8", "gs"), P("M5 16h4", "gt")],
  orbit: [P("M11 3l9 2-5 16-7-3z", "g"), P("M3 14q8-12 18-8", "ts"), P("M3 14q4 6 9 3", "gt")],
  maxToggle: [P("M3 2h18v20H3z", "g"), P("M4 21l16-18v18z", "dk"), P("M13 7h4v4h-4z", "g")],
};

// functional icon, draws one of the shape lists above
const Ic = (props: { n: string; s?: number | string }) => {
  const size = props.s ?? 24;
  return h(
    "svg",
    { viewBox: "0 0 24 24", width: size, height: size, style: { display: "block", flex: "none", overflow: "visible" } },
    (icons[props.n] || []).map((s, i) =>
      s.t
        ? h("text", { key: i, x: s.x, y: s.y, "font-size": s.fs, "font-family": "'Open Sans', sans-serif", ...paints[s.p] }, s.t)
        : h("path", { key: i, d: s.d, ...paints[s.p] }),
    ),
  );
};

type Tool = { key: string; left: number; w: number; icon?: string; label?: string; cls?: string; s?: number; m?: number };

// icon centered at c
const I = (c: number, icon: string, cls = "", w = 24, s = 24): Tool => ({ key: icon + c, left: c - w / 2, w, icon, cls, s });
const A = (x1: number, x2: number, icon: string, cls = "", s = 24): Tool => ({ key: icon + x1, left: x1, w: x2 - x1, icon, cls: "active " + cls, s });
const D = (x1: number, x2: number, label: string, cls = "drop"): Tool => ({ key: label + x1, left: x1, w: x2 - x1, label, cls });
const S = (x: number): Tool => ({ key: "sep" + x, left: x, w: 1, cls: "sep" });
const R = (x: number): Tool => ({ key: "grip" + x, left: x, w: 2, cls: "grip" });

// turns left edges into flow margins
function flow(start: number, list: Tool[]) {
  let pos = start;
  return list.map((t) => {
    const m = t.left - pos;
    pos = t.left + t.w;
    return { ...t, m };
  });
}

const menuAt: [string, number][] = [
  ["File", 13], ["Edit", 56], ["Tools", 104], ["Group", 158], ["Views", 217], ["Create", 275], ["Modifiers", 337],
  ["Animation", 410], ["Graph Editors", 490], ["Rendering", 589], ["Civil View", 670], ["Customize", 746], ["Scripting", 827],
  ["Interactive", 900], ["Content", 984], ["Help", 1055], ["Babylon", 1106], ["Prepar3D Tools", 1173],
  ["Prepar3D Documentation", 1283], ["Arnold", 1447], ["FlightSim", 1507],
];
// each item owns the slot up to the next one, the last ends at the user box
const mainMenu = menuAt.map(([t, x], i) => ({ t, w: (i < menuAt.length - 1 ? menuAt[i + 1][1] : 1585) - x }));

const mainTools = flow(0, [
  R(4),
  I(25, "undo"), I(57, "redo"), S(76), I(95, "link"), I(126, "unlink"), I(159, "bind"), S(177),
  D(182, 250, "All"),
  A(253, 282, "select"), I(298, "selName"), I(331, "region", "fly"), I(361, "windowCross"), S(383),
  I(401, "move"), I(433, "rotate"), I(465, "scale", "fly"), I(499, "place", "fly"),
  D(514, 582, "View"),
  I(599, "pivot", "fly"), S(617), I(637, "manip"), I(669, "keyb"), S(687),
  I(707, "snap3", "fly"), A(726, 754, "snapA"), I(772, "percent"), I(802, "spin"), S(821),
  I(839, "named"), D(858, 977, "Create Selection Se"),
  I(998, "mirror"), I(1030, "align", "fly"), S(1050), I(1068, "layer"), I(1101, "ribbon"), S(1120),
  I(1139, "editGrid"), I(1171, "curveEd"), I(1203, "dope"), S(1222), I(1243, "schem", "fly"),
  S(1261), I(1278, "tpGear"), I(1311, "tpFrame"), I(1343, "tpBolt", "fly"), I(1376, "tpCloud"), I(1407, "grid4"), R(1428),
  D(1435, 1675, "C:\\Users\\Christian\\Documents\\3ds Max 2020", "drop path"),
  I(1692, "folderGear"), I(1722, "folderOpen"), I(1753, "folderList"), I(1784, "folderTree"),
]);

const trackMenu = ["Editor", "Edit", "View", "Curves", "Keys", "Tangents", "Show"];

const trackTools = flow(14, [
  R(17),
  I(40, "filterGear"), I(72, "lockCur"), I(104, "drawCurve"), I(137, "addKey"),
  A(152, 182, "moveKey", "fly"), I(199, "slideKey"), I(230, "scaleKey"), I(263, "scaleVal"),
  I(295, "insertKey"), I(326, "retime"), I(361, "freehand"), I(394, "dim1"), I(423, "dim2"), I(456, "dim3"), I(487, "cursorT"),
  R(507), I(528, "keyArrow"), I(560, "snapKeys"), R(581), I(603, "tanOut"), I(635, "tanMirror"), I(667, "tanIn"), R(688),
  I(708, "hKey"), I(741, "hEven"), I(773, "vDown"), R(798), I(820, "aTan", "fly"), R(841), A(848, 878, "eyeCurve"),
]);

const trackBottom = flow(14, [
  R(18), I(37, "lens"), S(58), D(62, 210, "", "plain-drop"), S(217), I(239, "editLines"), D(256, 373, ""),
  I(391, "fLines"), I(423, "fRect"), I(455, "fFilm"), I(487, "fLayers"), I(519, "keyCircle"), I(550, "fEye"), I(583, "fLock"), R(610),
  D(616, 684, "100", "plain-drop"), S(686), D(690, 758, "", "plain-drop"), S(765), I(785, "keySmall"), R(800), I(820, "axes"), R(843), I(863, "hand"),
]);

// status rows: coords start at x=412, key block at x=1640
const statusTop = flow(412, [
  I(1032, "selCenter", "", 18, 16), I(1059, "lockO", "", 18, 16), I(1086, "absRel", "", 18, 16),
  D(1097, 1112, "X:", "coord-label"), D(1115, 1172, "-268,75m", "coord"),
  D(1184, 1197, "Y:", "coord-label"), D(1199, 1256, "-80,464m", "coord"),
  D(1269, 1281, "Z:", "coord-label"), D(1283, 1340, "0,0m", "coord"),
  D(1356, 1430, "Grid = 10,0m", "coord-label"),
  I(1476, "first", "", 16, 14), I(1502, "prev", "", 16, 14), I(1525, "play", "fly", 18, 18), I(1548, "next", "", 16, 14), I(1574, "last", "", 16, 14),
]);
const statusBottom = flow(412, [
  A(1330, 1351, "timeTag", "", 16), D(1356, 1440, "Add Time Tag", "coord-label"),
  I(1476, "keyMode", "", 16, 13), D(1491, 1560, "15", "spinner"), I(1575, "timeCfg", "", 18, 16),
]);
const keysTop = flow(1640, [
  D(1644, 1690, "Auto Key", "keybtn"), D(1694, 1810, "Selected", "drop keydrop"),
  I(1828, "zoom", "", 18, 16), I(1853, "zoomAll", "fly", 18, 16), I(1875, "zoomExt", "fly", 18, 16), I(1900, "zoomExtAll", "fly", 18, 16),
]);
const keysBottom = flow(1640, [
  D(1644, 1690, "Set Key", "keybtn"), I(1704, "keyTan", "fly", 18, 18), D(1721, 1809, "Key Filters...", "keybtn"),
  I(1829, "fovFly", "fly", 18, 16), I(1853, "hand", "", 18, 16), I(1875, "orbit", "fly", 18, 16), I(1897, "maxToggle", "", 18, 16),
]);

type TreeRow = { t: string; x: number; bold?: boolean; sel?: boolean; current?: boolean };
const treeData: TreeRow[] = [
  { t: "Y Position", x: 99 }, { t: "Z Position", x: 99 }, { t: "Rotation", x: 88 }, { t: "Y Rotation", x: 99 },
  { t: "Z Rotation", x: 99, sel: true }, { t: "Scale", x: 88 }, { t: "Object (Editable Mesh)", x: 72 },
  { t: "do_windkraft_enercon_e70_113m_medium", x: 72, bold: true }, { t: "do_windkraft_enercon_e70_rotor", x: 72, current: true },
  { t: "Transform", x: 88 }, { t: "Position", x: 104 }, { t: "Y Position", x: 115 }, { t: "Z Position", x: 115 }, { t: "Rotation", x: 104 },
  { t: "Y Rotation", x: 115, sel: true }, { t: "Z Rotation", x: 115 }, { t: "Scale", x: 104 }, { t: "Object (Editable Mesh)", x: 88 },
];
const treeRows = treeData.map((r, i) => ({ ...r, key: i }));

const graphKeys: [number, number][] = [
  [469, 255], [554, 265], [640, 276], [725, 287], [811, 298],
  [469, 311], [554, 322], [640, 332], [725, 343], [811, 354],
];
const gridY = Array.from({ length: 19 }, (_, i) => 170.5 + i * 14);
const rulerTicks = Array.from({ length: 70 }, (_, i) => 384 + i * 6.85);
const rulerLabels: [string, number][] = [["-20", 404], ["0", 473], ["20", 541], ["40", 610], ["60", 678], ["80", 746], ["100", 814]];

const cmdTabs = ["plus", "modify", "hierarchy", "motion", "display", "wrench"];
const cmdSub = ["sphere", "shapes", "bulb", "camera", "helper", "waves", "gears"];
const primitives = ["Box", "Cone", "Sphere", "GeoSphere", "Cylinder", "Tube", "Torus", "Pyramid", "Teapot", "Plane", "TextPlus"];

const frames = Array.from({ length: 101 }, (_, i) => i);
const frameLabels = Array.from({ length: 21 }, (_, i) => i * 5);
const frameX = (f: number) => Math.round(66 + f * 17.97) + 0.5;
</script>

<style>
html, body { margin: 0; background: #444; overflow: hidden; }
</style>

<style scoped>
.app {
  position: relative;
  width: 1920px;
  height: 1080px;
  display: flex;
  flex-direction: column;
  overflow: hidden;
  background: #444;
  color: #e0e0e0;
  font: 11.5px "Open Sans", sans-serif;
}

button { font: inherit; padding: 0; cursor: default; }

/* title + menu */
.titlebar {
  height: 23px;
  flex: none;
  background: #fff;
  color: #111;
  display: flex;
  align-items: center;
  font-size: 11.3px;
}
.logo {
  width: 13px;
  height: 17px;
  margin: 0 7px 0 3px;
  background: #3aa7a3;
  color: #222;
  font: bold 12px "Liberation Sans", sans-serif;
  text-align: center;
  line-height: 17px;
}
.logo.small { margin: 0 7px 0 9px; }
.win-btns {
  margin-left: auto;
  display: flex;
  gap: 33px;
  padding-right: 19px;
}
.win-btns.dim { gap: 34px; padding-right: 17px; opacity: 0.7; }

.menubar {
  height: 23px;
  flex: none;
  box-sizing: border-box;
  background: #484848;
  border-bottom: 1px solid #262626;
  display: flex;
  align-items: center;
  padding-left: 13px;
  white-space: nowrap;
}
.menu-item { flex: none; }
.user-box {
  width: 120px;
  flex: none;
  height: 22px;
  background: #d2d2d2;
  color: #222;
  display: flex;
  align-items: center;
  gap: 2px;
  padding-left: 3px;
  box-sizing: border-box;
  position: relative;
}
.ws-label { width: 75px; flex: none; padding-left: 10px; box-sizing: border-box; color: #cfcfcf; font-size: 10.4px; }
.ws-drop {
  flex: 1;
  height: 20px;
  margin-right: 2px;
  background: #666;
  color: #ddd;
  display: flex;
  align-items: center;
  padding-left: 4px;
  position: relative;
}
.caret {
  position: absolute;
  right: 8px;
  top: 50%;
  margin-top: -2px;
  border: 3.5px solid transparent;
  border-top: 5px solid #e0e0e0;
  border-bottom: 0;
}
.caret.dark { border-top-color: #222; }

/* toolbars */
.toolbar {
  height: 34px;
  background: #444;
  display: flex;
  align-items: center;
  flex: none;
}
.tool {
  height: 28px;
  flex: none;
  display: flex;
  align-items: center;
  justify-content: center;
  position: relative;
  white-space: nowrap;
}
.tool.active { background: #5b86bf; height: 32px; }
.tool.sep { background: #252525; height: 22px; }
.tool.grip {
  height: 26px;
  background: repeating-linear-gradient(#a0a0a0 0 1px, transparent 1px 3px);
}
.tool.fly::after {
  content: "";
  position: absolute;
  right: -2px;
  bottom: 0;
  border-left: 4px solid transparent;
  border-bottom: 4px solid #ddd;
}
.tool.drop, .tool.plain-drop {
  background: #646464;
  justify-content: flex-start;
  padding-left: 5px;
  box-sizing: border-box;
  height: 24px;
  color: #ccc;
  overflow: hidden;
  font-size: 10.5px;
}
.tool.path { font-size: 10.2px; letter-spacing: -0.2px; padding-left: 3px; }
.tool.drop::after {
  content: "";
  position: absolute;
  right: 7px;
  top: 50%;
  margin-top: -2px;
  border: 3.5px solid transparent;
  border-top: 5px solid #ddd;
  border-bottom: 0;
}
.tool.plain-drop { height: 15px; background: #666; }

/* viewports */
.work { display: flex; height: 891px; flex: none; }
.viewports {
  width: 1716px;
  flex: none;
  display: grid;
  grid-template-columns: 858px 855px;
  grid-template-rows: 442px 443px;
  column-gap: 3px;
  row-gap: 6px;
}
.vp { position: relative; overflow: hidden; }
.vp-tl { background: linear-gradient(#1d1d1d, #3d3d3d); }
.vp-back { background: linear-gradient(#1c1c1c, #4b4b4b); }
.vp-bl { background: #343434; }
.vp-persp {
  background: linear-gradient(#1f1f1f, #4d4d4d);
  box-shadow: inset 0 0 0 1.5px #7a6a2c;
}
.vp-label {
  position: absolute;
  left: 5px;
  top: 7px;
  font-size: 11.2px;
  color: #cfcfcf;
  white-space: nowrap;
  z-index: 1;
}
.scene { position: absolute; inset: 0; width: 100%; height: 100%; }
.axis { font: 9px "Open Sans", sans-serif; }

/* command panel */
.cmd {
  flex: 1;
  margin-left: 6px;
  padding: 2px 0 0 4px;
  background: #444;
  box-shadow: -6px 0 0 #3d3d3d;
}
.cmd-dots {
  height: 2px;
  background: repeating-linear-gradient(90deg, #aaa 0 1px, transparent 1px 2px);
  margin: 0 2px 6px -2px;
}
.cmd-tabs { display: flex; gap: 1px; height: 26px; margin: 0 0 5px -4px; }
.cmd-tab {
  width: 31px;
  height: 26px;
  background: #3d3d3d;
  display: flex;
  align-items: center;
  justify-content: center;
}
.cmd-tab.on { background: #4a4a4a; width: 30px; }
.cmd-sub { display: flex; align-items: center; gap: 4px; height: 20px; margin: 0 0 7px 1px; }
.cmd-sub-item {
  width: 18px;
  height: 20px;
  display: flex;
  align-items: center;
  justify-content: center;
}
.cmd-sub-item.on { background: #5b86bf; width: 20px; }
.cmd-drop {
  position: relative;
  width: 189px;
  height: 20px;
  background: #646464;
  color: #dcdcdc;
  line-height: 20px;
  padding-left: 4px;
  box-sizing: border-box;
  margin-bottom: 6px;
}
.rollout {
  width: 181px;
  background: #4b4b4b;
  box-sizing: border-box;
  margin-bottom: 5px;
  padding-top: 2px;
}
.r-type { height: 166px; }
.r-name { height: 55px; }
.r-head { display: flex; align-items: center; height: 14px; position: relative; padding-left: 19px; color: #fff; }
.r-head b { font-weight: 700; }
.caret.small { left: 6px; right: auto; border-top-color: #ccc; }
.r-grip {
  position: absolute;
  right: 4px;
  top: 2px;
  width: 8px;
  height: 8px;
  background: radial-gradient(#888 35%, transparent 40%) 0 0 / 3px 3px;
}
.autogrid { color: #777; height: 16px; margin-top: 6px; padding-left: 56px; display: flex; align-items: center; position: relative; line-height: 16px; }
.autogrid i { width: 9px; height: 9px; background: #555; position: absolute; left: 43px; }
.prim-grid {
  display: grid;
  grid-template-columns: 67px 67px;
  column-gap: 11px;
  row-gap: 5px;
  margin: 2px 0 0 18px;
}
.prim-grid button {
  height: 16px;
  border: 0;
  border-radius: 2px;
  background: #5e5e5e;
  color: #dcdcdc;
  line-height: 16px;
}
.name-row { display: flex; align-items: center; margin: 8px 0 0 17px; }
.name-field { width: 129px; height: 18px; background: #555; color: #888; padding-left: 4px; box-sizing: border-box; line-height: 18px; }
.swatch { width: 16px; height: 20px; margin-left: 4px; border: 1px solid #1a1a1a; box-sizing: border-box; background: #4e4e4e; }

/* time slider + timeline */
.sliderbar {
  height: 27px;
  flex: none;
  display: flex;
  align-items: center;
  padding-left: 265px;
  box-sizing: border-box;
  gap: 1px;
  padding-top: 3px;
}
.sl-btn {
  width: 15px;
  height: 16px;
  background: #5c5c5c;
  text-align: center;
  line-height: 15px;
  font-size: 11px;
  border-radius: 2px;
}
.sl-track {
  width: 123px;
  height: 16px;
  background: #646464;
  border-radius: 2px;
  text-align: center;
  line-height: 16px;
  font-size: 11px;
}
.timeline { display: block; width: 1920px; height: 25px; flex: none; }
.tl-text { font: 10.5px "Open Sans", sans-serif; fill: #c8c8c8; }

/* status */
.status { height: 57px; flex: none; display: flex; }
.script-boxes { width: 107px; flex: none; padding: 6px 0 0 5px; box-sizing: border-box; border-right: 1px solid #2c2c2c; height: 57px; }
.pink-box { width: 96px; height: 20px; background: #dcc3c3; border: 1px solid #999; box-sizing: border-box; margin-bottom: 3px; }
.script-box {
  width: 96px;
  height: 22px;
  background: #fff;
  border: 1px solid #999;
  box-sizing: border-box;
  color: #222;
  font: 12px/20px "Liberation Mono", monospace;
  padding-left: 3px;
  overflow: hidden;
}
.prompts { width: 305px; flex: none; padding: 10px 0 0 5px; box-sizing: border-box; display: flex; flex-direction: column; gap: 9px; font-size: 10.5px; line-height: 16px; white-space: nowrap; }
.st-block { display: flex; flex-direction: column; gap: 3px; padding-top: 8px; }
.coords { width: 1185px; flex: none; }
.keys { flex: 1; }
.st-row { display: flex; align-items: center; height: 20px; }
.tool.st { height: 20px; font-size: 10.5px; }
.tool.coord { background: #5e5e5e; color: #888; justify-content: flex-start; padding-left: 3px; box-sizing: border-box; height: 18px; overflow: hidden; }
.tool.coord-label { justify-content: flex-start; }
.tool.spinner { background: #646464; justify-content: flex-start; padding-left: 4px; box-sizing: border-box; }
.tool.keybtn { background: #5c5c5c; border-radius: 2px; }
.tool.keydrop { height: 20px; }
.bigkey {
  flex: none;
  margin-top: 7px;
  width: 43px;
  height: 43px;
  background: #5c5c5c;
  border-radius: 2px;
  display: flex;
  align-items: center;
  justify-content: center;
}

/* floating windows */
.win { position: absolute; display: flex; flex-direction: column; }
.win-title {
  height: 30px;
  background: #fff;
  color: #8a8a8a;
  display: flex;
  align-items: center;
  flex: none;
  font-size: 11.4px;
}
.track {
  left: 14px;
  top: 78px;
  width: 866px;
  height: 420px;
  background: #444;
}
.track-menu {
  height: 20px;
  box-sizing: border-box;
  background: #444;
  border-bottom: 1px solid #2a2a2a;
  display: flex;
  align-items: center;
  gap: 26.6px;
  padding-left: 13px;
  flex: none;
}
.track-tools { height: 34px; }
.track-body {
  display: grid;
  grid-template-columns: 340px 18px 4px 488px 16px;
  grid-template-rows: 285px 15px;
  flex: none;
}
.tree { position: relative; overflow: hidden; background: #444; border-left: 2px solid #111; box-sizing: border-box; }
.tree-rows { margin: -1px 0 0 -2px; }
.tree-row {
  display: flex;
  height: 16px;
  line-height: 16px;
  box-sizing: border-box;
  white-space: nowrap;
  color: #d8d8d8;
  font-size: 10.5px;
}
.tree-label { flex: 1; padding-left: 1px; }
.tree-row.bold { font-weight: 700; color: #eee; font-size: 11.9px; }
.tree-row.sel .tree-label { color: #fff; background: #5b86bf; }
.tree-row.sel .tree-label span { text-decoration: underline; }
.tree-row.current .tree-label { box-shadow: inset 0 0 0 1px #5b86bf; }
.tree-lines { position: absolute; inset: 0 0 0 -2px; width: 340px; height: 285px; pointer-events: none; }
.vscroll {
  background: #f0f0f0;
  display: flex;
  flex-direction: column;
  align-items: center;
  padding: 2px 0;
  box-sizing: border-box;
  width: 17px;
  position: relative;
  justify-content: space-between;
}
.vscroll.narrow { width: 16px; padding-top: 4px; }
.v-thumb { position: absolute; left: 1px; right: 0; height: 17px; background: #cdcdcd; }
.v-thumb.t1 { top: 21px; }
.v-thumb.t2 { top: 172px; }
.gap { background: #2b2b2b; border-right: 2px solid #0c0c0c; box-sizing: border-box; }
.gap.dark { grid-column: 3; }
.graph { display: block; width: 488px; height: 285px; }
.hscroll {
  background: #f0f0f0;
  display: flex;
  align-items: center;
  justify-content: space-between;
  padding: 0 2px;
  box-sizing: border-box;
  position: relative;
}
.hscroll.s1 { grid-column: 1 / 3; }
.hscroll.s2 { grid-column: 4; }
.h-thumb { position: absolute; top: 0; width: 17px; height: 100%; background: #cdcdcd; }
.s1 .h-thumb { left: 24px; }
.s2 .h-thumb { left: 205px; }
.hcorner { background: #fff; }
.track-bottom { height: 33px; }

.babylon {
  left: 8px;
  top: 507px;
  width: 763px;
  height: 461px;
  background: #f0f0f0;
  color: #111;
  font-size: 10.6px;
}
.win-title.plain { padding-left: 8px; position: relative; }
.close-stub { position: absolute; right: 1px; top: 1px; width: 17px; height: 15px; background: #e6e6e6; }
.dlg-body { display: flex; padding: 12px 0 0 13px; align-items: flex-start; }
.group {
  margin: 0;
  padding: 0;
  border: 1px solid #dcdcdc;
  height: 406px;
  box-sizing: border-box;
  min-width: 0;
}
.group legend { padding: 0 2px 0 1px; line-height: 14px; height: 14px; }
.g-anim legend { margin-left: 2px; }
.g-opts legend { margin-left: 0; }
.g-nodes legend { margin-left: 6px; }
.g-mats legend { margin-left: 5px; }
.g-anim { width: 174px; padding-left: 5px; }
.splitter { width: 4px; height: 406px; margin: 0 4px 0 2px; background: #bcd3ec; flex: none; }
.btn-row { display: flex; margin-top: 5px; }
.btn-row.first { margin-top: 6px; }
.btn-row button, .long, .confirm-row button {
  height: 22px;
  background: #e1e1e1;
  border: 1px solid #adadad;
  color: #111;
  box-sizing: border-box;
}
.focus { border: 2px solid #0078d7 !important; }
.w46 { width: 46px; } .w45 { width: 45px; } .w44 { width: 44px; } .w42 { width: 42px; }
.m8 { margin-left: 8px; } .m9 { margin-left: 9px; }
.anim-list {
  margin: 4px 0 0 -4px;
  width: 171px;
  height: 329px;
  background: #fff;
  border: 1px solid #7a7a7a;
  box-sizing: border-box;
  padding: 1px;
  line-height: 13px;
}
.anim-list div { padding-left: 1px; height: 13px; white-space: nowrap; }
.anim-list .picked { background: #0078d7; color: #fff; }
.g-opts { width: 185px; padding-left: 4px; margin-right: 6px; }
.field-row { display: flex; align-items: center; }
.field-row.name { margin-top: 5px; height: 20px; }
.field-row.range { margin-top: 6px; height: 20px; }
.field-row label { width: 33px; flex: none; }
.input {
  height: 20px;
  border: 1px solid #7a7a7a;
  background: #fff;
  box-sizing: border-box;
  padding-left: 2px;
  line-height: 18px;
  flex: none;
}
.input.wide { width: 142px; }
.input.short { width: 40px; }
.field-row label.end { width: 30px; margin-left: 15px; }
.check { display: flex; align-items: center; gap: 4px; margin: 9px 0 0 1px; height: 13px; }
.check svg { background: #fff; outline: 1px solid #444; outline-offset: -1px; }
.check.second { margin-top: 10px; }
.long { display: block; width: 176px; margin: 2px 0 0 -2px; }
.long.first { margin-top: 16px; }
.confirm-row { display: flex; gap: 8px; margin: 8px 0 0 -2px; }
.confirm-row button { width: 58px; height: 21px; }
.note {
  margin: 79px 0 0 -3px;
  width: 178px;
  height: 97px;
  border: 1px solid #6d6d6d;
  box-sizing: border-box;
  text-align: center;
  color: #7a7a7a;
  line-height: 13px;
  padding: 11px 3px 0;
}
.note p { margin: 0; }
.note-h { margin-bottom: 11px !important; }
.g-nodes { width: 172px; padding-left: 1px; margin-right: 4px; }
.node-tree {
  position: relative;
  width: 168px;
  height: 387px;
  background: #1e90ff;
  border: 1px solid #7a7a7a;
  box-sizing: border-box;
  margin-top: 2px;
  overflow: hidden;
}
.node-row { display: flex; height: 16px; line-height: 16px; white-space: nowrap; overflow: hidden; align-items: center; }
.node-row.one { padding-left: 9px; margin-top: 1px; color: #808080; }
.node-row.one span { background: #fff; flex: 1; margin-left: 4px; padding-left: 2px; overflow: hidden; }
.node-row.two { margin-left: 42px; background: #fff; padding-left: 2px; margin-right: 1px; }
.minus { width: 8px; height: 8px; background: #d0d0d0; border: 1px solid #777; box-sizing: border-box; flex: none; }
.node-scroll {
  position: absolute;
  left: 1px;
  right: 1px;
  bottom: 1px;
  height: 16px;
  background: #f0f0f0;
  display: flex;
  align-items: center;
  justify-content: space-between;
  padding: 0 4px;
  box-sizing: border-box;
}
.nthumb { position: absolute; left: 17px; width: 106px; top: 0; bottom: 0; background: #cdcdcd; }
.g-mats { width: 188px; border-right: 0; padding-left: 3px; }
.mat-box { width: 184px; height: 387px; margin-top: 2px; background: #fff; border: 1px solid #7a7a7a; border-right: 0; box-sizing: border-box; }
.g-text { font: 11.5px "Open Sans", sans-serif; fill: #c8c8c8; }
</style>
